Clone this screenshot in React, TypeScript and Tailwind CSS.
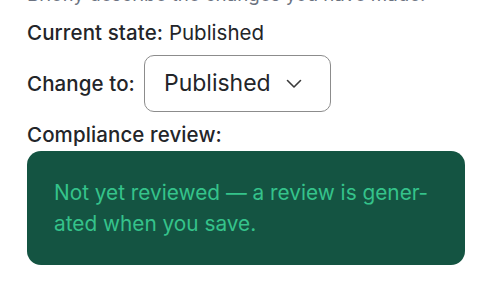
import React from "react";

export default function App() {
  return (
    <div className="w-[480px] h-[290px] overflow-hidden bg-white" style={{ fontFamily: "Inter, 'Noto Sans', sans-serif" }}>
      <div className="pl-[27px] pr-[15px]">
        <p className="mt-[-19px] text-[18.7px] leading-[28px] text-[#6b7280] whitespace-nowrap">Briefly describe the changes you have made.</p>
        <p className="mt-[10px] text-[20.5px] leading-[28px] text-[#232529]">
          <span className="font-medium tracking-[0.1px]">Current state:</span> Published
        </p>
        <div className="mt-[8px] flex items-center gap-[9px]">
          <span className="text-[20.5px] leading-[28px] font-medium tracking-[0.1px] text-[#232529]">Change to:</span>
          <div className="h-[57px] w-[187px] rounded-[10px] border border-[#8c8c8c] flex items-center pl-[19px] pr-[28px] justify-between">
            <span className="text-[23px] text-[#232529]">Published</span>
            <svg width="16" height="10" viewBox="0 0 16 10" fill="none">
              <path d="M1.5 1.5 L8 8 L14.5 1.5" stroke="#3a3a3a" strokeWidth="1.6" strokeLinecap="round" strokeLinejoin="round" />
            </svg>
          </div>
        </div>
        <p className="mt-[9px] text-[20.5px] leading-[28px] font-medium tracking-[0.1px] text-[#232529]">Compliance review:</p>
        <div className="mt-[2px] rounded-[14px] bg-[#145442] px-[27px] py-[26px]">
          <p lang="en" className="text-[20.8px] leading-[31px] text-[#35c38b]">
            Not yet reviewed — a review is gener&shy;ated when you save.
          </p>
        </div>
      </div>
    </div>
  );
}
